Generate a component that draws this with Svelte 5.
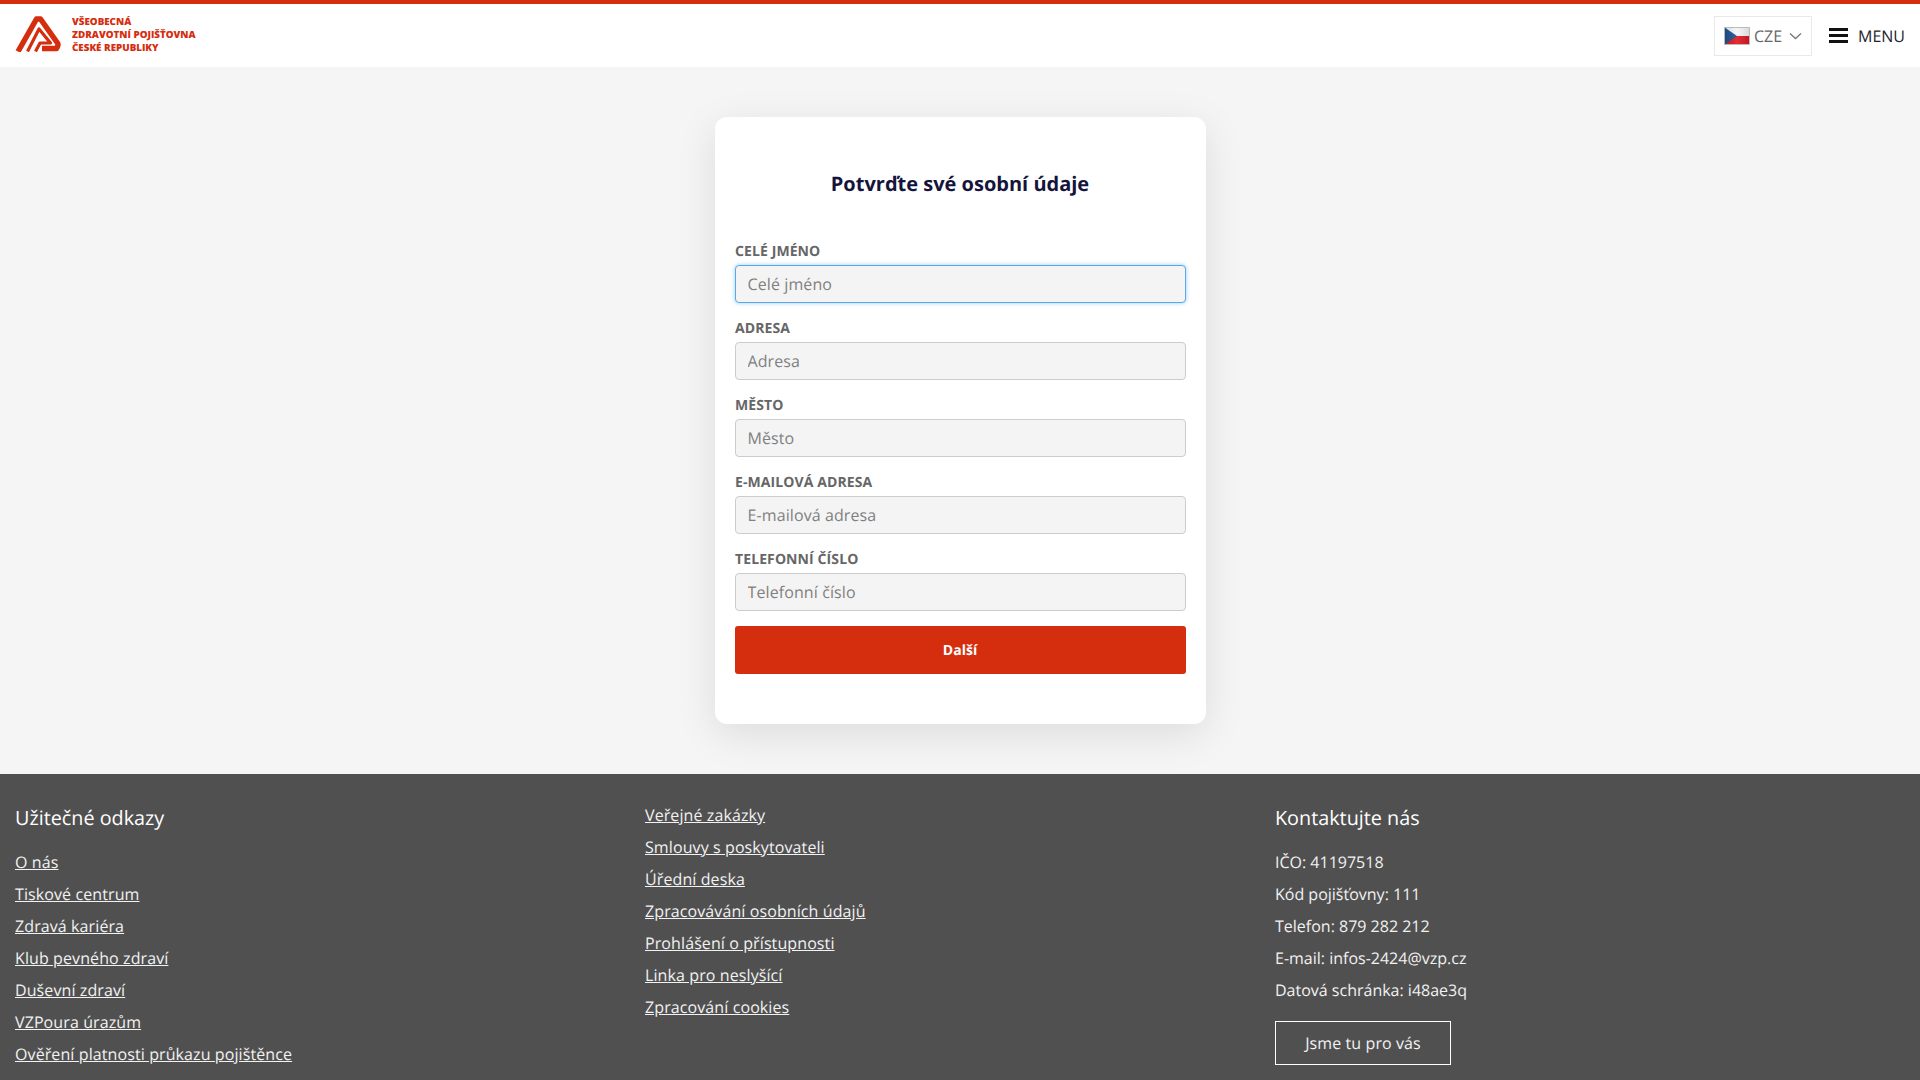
<script>
  const fields = [
    { label: 'Celé jméno', focus: true },
    { label: 'Adresa' },
    { label: 'Město' },
    { label: 'E-mailová adresa' },
    { label: 'Telefonní číslo' }
  ];
  const left = ['O nás', 'Tiskové centrum', 'Zdravá kariéra', 'Klub pevného zdraví', 'Duševní zdraví', 'VZPoura úrazům', 'Ověření platnosti průkazu pojištěnce'];
  const mid = ['Veřejné zakázky', 'Smlouvy s poskytovateli', 'Úřední deska', 'Zpracovávání osobních údajů', 'Prohlášení o přístupnosti', 'Linka pro neslyšící', 'Zpracování cookies'];
  const contact = ['IČO: 41197518', 'Kód pojišťovny: 111', 'Telefon: 879 282 212', 'E-mail: infos-2424@vzp.cz', 'Datová schránka: i48ae3q'];
</script>

<header class="header">
  <a class="logo" href="#top">
    <svg class="mark" width="46" height="36" viewBox="0 0 46 36" fill="none" stroke="#d52e0f" stroke-linejoin="round">
      <path stroke-width="5.5" d="M3 35.5 L21.5 3 H25.5 L42.5 27 Q43.8 29 41.5 32.6 H27" />
      <path stroke-width="3.2" d="M12.5 35.5 L24 13 L35.5 27 H25 L20.5 35.5" />
    </svg>
    <span class="wordmark">
      <span>VŠEOBECNÁ</span>
      <span>ZDRAVOTNÍ POJIŠŤOVNA</span>
      <span>ČESKÉ REPUBLIKY</span>
    </span>
  </a>
  <div class="tools">
    <div class="lang">
      <svg class="flag" width="26" height="18" viewBox="0 0 26 18">
        <defs>
          <linearGradient id="sheen" x1="0" x2="1" y1="0" y2="0">
            <stop offset="0" stop-color="#000" stop-opacity="0.12" />
            <stop offset="0.5" stop-color="#fff" stop-opacity="0.1" />
            <stop offset="1" stop-color="#000" stop-opacity="0.12" />
          </linearGradient>
        </defs>
        <rect width="26" height="9" fill="#f4f4f4" />
        <rect y="9" width="26" height="9" fill="#dc1620" />
        <path d="M0 0 L13 9 L0 18 Z" fill="#1b4f8f" />
        <rect width="26" height="18" fill="url(#sheen)" />
      </svg>
      <span class="code">CZE</span>
      <svg width="13" height="8" viewBox="0 0 13 8" fill="none" stroke="#777" stroke-width="1.3">
        <path d="M1 1.5 L6.5 6.5 L12 1.5" />
      </svg>
    </div>
    <div class="menu">
      <span class="burger"><i></i><i></i><i></i></span>
      <span>MENU</span>
    </div>
  </div>
</header>

<main class="main">
  <section class="card">
    <h1>Potvrďte své osobní údaje</h1>
    <form class="form">
      {#each fields as f}
        <div class="field">
          <span class="label">{f.label}</span>
          <input class:focus={f.focus} placeholder={f.label} />
        </div>
      {/each}
      <button type="button" class="next">Další</button>
    </form>
  </section>
</main>

<footer class="footer">
  <div class="col">
    <h2>Užitečné odkazy</h2>
    {#each left as l}<a href="#top">{l}</a>{/each}
  </div>
  <div class="col">
    {#each mid as l}<a href="#top">{l}</a>{/each}
  </div>
  <div class="col">
    <h2>Kontaktujte nás</h2>
    {#each contact as c}<p>{c}</p>{/each}
    <a class="cta" href="#top">Jsme tu pro vás</a>
  </div>
</footer>

<style>
  :global(body) {
    margin: 0;
    background: #f5f5f5;
    font-family: "Open Sans", "Noto Sans", sans-serif;
    color: #212529;
    text-rendering: geometricPrecision;
  }
  .header {
    height: 63px;
    background: #fff;
    border-top: 4px solid #d52e0f;
    display: flex;
    align-items: center;
    justify-content: space-between;
    padding: 0 15px;
  }
  .logo {
    display: flex;
    align-items: center;
    gap: 11px;
    text-decoration: none;
    color: #d52e0f;
    margin-top: -3px;
  }
  .mark { flex: none; }
  .wordmark {
    display: flex;
    flex-direction: column;
    font-size: 9.8px;
    line-height: 13px;
    font-weight: 800;
    white-space: nowrap;
  }
  .tools {
    display: flex;
    align-items: center;
    gap: 17px;
  }
  .lang {
    width: 98px;
    height: 40px;
    box-sizing: border-box;
    border: 1px solid #e9e9e9;
    display: flex;
    align-items: center;
    padding-left: 9px;
    font-size: 16px;
    color: #666;
  }
  .flag { outline: 1px solid #bbb; outline-offset: -1px; }
  .code { margin: 0 7px 0 4px; }
  .menu {
    display: flex;
    align-items: center;
    gap: 10px;
    font-size: 16px;
    color: #212529;
  }
  .burger {
    display: flex;
    flex-direction: column;
    gap: 3px;
    width: 19px;
  }
  .burger i {
    display: block;
    height: 3px;
    background: #111;
  }
  .main {
    height: 707px;
    padding-top: 50px;
    box-sizing: border-box;
    display: flex;
    justify-content: center;
  }
  .card {
    width: 491px;
    height: 607px;
    box-sizing: border-box;
    background: #fff;
    border-radius: 12px;
    padding: 20px;
    box-shadow: 0 10px 40px rgba(0, 0, 0, 0.1);
  }
  h1 {
    margin: 32px 0 0;
    font-size: 20px;
    line-height: 30px;
    font-weight: 700;
    text-align: center;
    color: #14143c;
  }
  .form {
    margin-top: 42px;
    display: flex;
    flex-direction: column;
    gap: 15px;
  }
  .field {
    display: flex;
    flex-direction: column;
    gap: 3px;
  }
  .label {
    font-size: 14px;
    line-height: 22px;
    font-weight: 700;
    letter-spacing: 0.1px;
    text-transform: uppercase;
    color: #666;
    height: 21px;
    padding-left: 0.5px;
  }
  input {
    height: 38px;
    box-sizing: border-box;
    width: 100%;
    padding: 0 12px;
    border: 1px solid #ccc;
    border-radius: 4px;
    background: #f4f4f4;
    font: 400 16px "Open Sans", sans-serif;
    letter-spacing: 0.1px;
    outline: none;
    text-rendering: geometricPrecision;
  }
  input::placeholder { color: #808080; opacity: 1; }
  input.focus {
    border-color: #5aa9ec;
    box-shadow: 0 0 4px rgba(90, 169, 236, 0.6);
  }
  .next {
    height: 48px;
    border: 0;
    border-radius: 3px;
    background: #d52e0f;
    color: #fff;
    font: 700 14px "Open Sans", sans-serif;
    text-rendering: geometricPrecision;
  }
  .footer {
    background: #505050;
    color: #f2f2f2;
    display: grid;
    grid-template-columns: repeat(3, 630px);
    padding: 25px 15px 20px;
    min-height: 260px;
    box-sizing: border-box;
    font-size: 16px;
    line-height: 32px;
  }
  .col {
    display: flex;
    flex-direction: column;
    align-items: flex-start;
  }
  .col a {
    letter-spacing: 0.1px;
  }
  .col a, .col p {
    color: #f2f2f2;
    margin: 0;
  }
  h2 {
    margin: 4px 0 13px;
    font-size: 19.8px;
    line-height: 30px;
    font-weight: 400;
    color: #fff;
  }
  .col .cta {
    margin-top: 15px;
    width: 176px;
    height: 44px;
    box-sizing: border-box;
    border: 1px solid #fff;
    display: flex;
    align-items: center;
    justify-content: center;
    text-decoration: none;
  }
</style>
